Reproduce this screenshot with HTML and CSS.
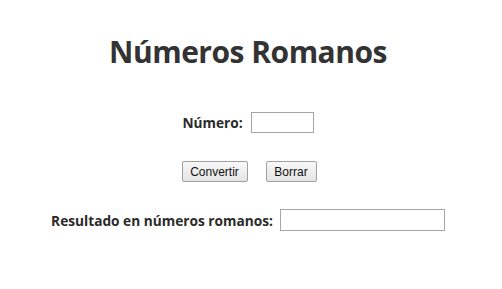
FILE: index.html
```html
<!DOCTYPE html>
<html lang="es">
<head>
<meta charset="utf-8">
<title>Números Romanos</title>
<link rel="stylesheet" href="styles.css">
</head>
<body>
<h1 class="title">Números Romanos</h1>
<form class="form">
  <div class="row row-num">
    <label class="label" for="num">Número:</label>
    <input class="field field-num" id="num" type="text">
  </div>
  <div class="row row-btns">
    <button class="btn btn-conv" type="button">Convertir</button>
    <button class="btn btn-del" type="reset">Borrar</button>
  </div>
  <div class="row row-res">
    <label class="label" for="res">Resultado en números romanos:</label>
    <input class="field field-res" id="res" type="text">
  </div>
</form>
</body>
</html>
```
FILE: styles.css
```css
html, body {
  margin: 0;
  padding: 0;
  background: #ffffff;
}
body {
  width: 502px;
  font-family: "Open Sans", "DejaVu Sans", sans-serif;
  color: #2a2a2a;
}
.title {
  margin: 30px 0 0 0;
  padding-right: 6px;
  text-align: center;
  font-size: 30px;
  line-height: 44px;
  font-weight: 700;
  color: #333333;
  letter-spacing: -0.5px;
}
.form {
  display: flex;
  flex-direction: column;
  align-items: center;
  padding-right: 6px;
  margin-top: 38px;
}
.row {
  display: flex;
  align-items: center;
  justify-content: center;
}
.row-num {
  gap: 8px;
  height: 21px;
}
.row-btns {
  gap: 18px;
  height: 21px;
  margin-top: 28px;
  padding-left: 2px;
}
.row-res {
  gap: 7px;
  height: 22px;
  margin-top: 27px;
}
.label {
  font-size: 13.7px;
  font-weight: 700;
  color: #2a2a2a;
}
.field {
  box-sizing: border-box;
  margin: 0;
  padding: 1px 3px;
  border: 1px solid #a5a5a5;
  background: #ffffff;
  font-family: "Liberation Sans", Arial, sans-serif;
  font-size: 12px;
}
.field-num {
  width: 63px;
  height: 21px;
}
.field-res {
  width: 165px;
  height: 22px;
}
.btn {
  box-sizing: border-box;
  margin: 0;
  height: 21px;
  padding: 0 6px;
  border: 1px solid #a0a0a0;
  border-radius: 2px;
  background: linear-gradient(#f8f8f8, #e4e4e4);
  font-family: "Liberation Sans", Arial, sans-serif;
  font-size: 12px;
  color: #111111;
}
.btn-conv {
  width: 66px;
}
.btn-del {
  width: 51px;
}
```
